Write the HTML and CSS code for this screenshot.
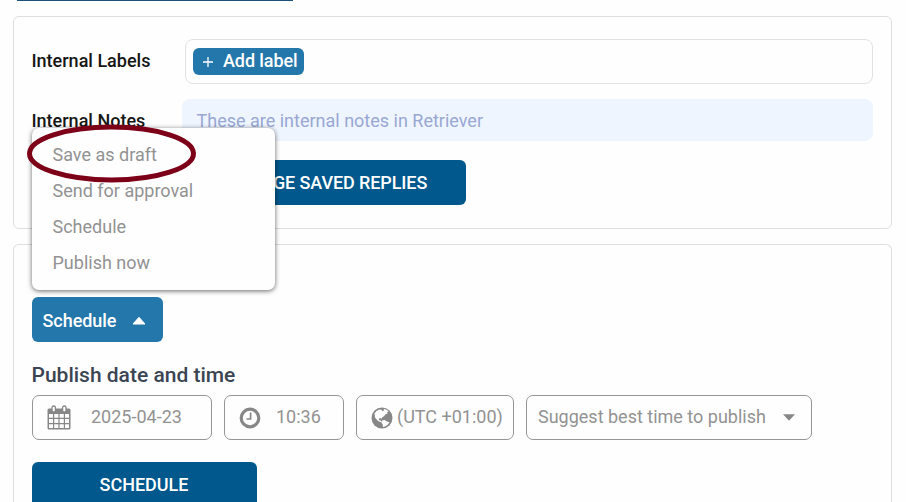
FILE: index.html
```html
<!DOCTYPE html>
<html lang="en">

<head>
    <meta charset="UTF-8">
    <meta name="viewport" content="width=device-width, initial-scale=1.0">
    <title>Publish Settings</title>
    <link rel="stylesheet" href="styles.css">
</head>

<body>
    <div class="top-bar"></div>

    <section class="card labels-card">
        <div class="row">
            <span class="row-label">Internal Labels</span>
            <div class="label-box">
                <button type="button" class="add-label">
                    <svg width="10" height="10" viewBox="0 0 10 10"><path d="M5 0v10M0 5h10" stroke="#fff" stroke-width="1.3"/></svg>
                    <span>Add label</span>
                </button>
            </div>
        </div>
        <div class="row notes-row">
            <span class="row-label">Internal Notes</span>
            <div class="notes-box">These are internal notes in Retriever</div>
        </div>
        <button type="button" class="btn saved-replies">MANAGE SAVED REPLIES</button>
    </section>

    <section class="card publish-card">
        <div class="dropdown">
            <button type="button" class="dropdown-toggle">
                <span>Schedule</span>
                <svg width="14" height="8" viewBox="0 0 14 8"><path d="M7 .3 13 7H1z" fill="#fff" stroke="#fff" stroke-linejoin="round"/></svg>
            </button>
            <ul class="dropdown-menu">
                <li>Save as draft</li>
                <li>Send for approval</li>
                <li>Schedule</li>
                <li>Publish now</li>
            </ul>
            <svg class="marker" width="170" height="60" viewBox="0 0 170 60"><ellipse cx="84.500" cy="30.500" rx="82" ry="26.500" fill="none" stroke="#7d0019" stroke-width="5"/></svg>
        </div>

        <h2>Publish date and time</h2>
        <div class="fields">
            <div class="field date-field">
                <svg width="24" height="25" viewBox="0 0 24 25">
                    <path fill="#878787" fill-rule="evenodd" d="M2 3.500h20A1.500 1.500 0 0 1 23.500 5v18a1.500 1.500 0 0 1-1.500 1.500H2A1.500 1.500 0 0 1 .5 23V5A1.500 1.500 0 0 1 2 3.500zM2 9v3.800h4V9zM7.200 9v3.800h4.200V9zM12.600 9v3.800h4.200V9zM18 9v3.800h4V9zM2 14v4h4v-4zM7.200 14v4h4.200v-4zM12.600 14v4h4.200v-4zM18 14v4h4v-4zM2 19.200V23h4v-3.800zM7.200 19.200V23h4.200v-3.800zM12.600 19.200V23h4.200v-3.800zM18 19.200V23h4v-3.800z"/>
                    <rect x="5" y="1" width="3.400" height="6" rx="1.600" fill="#fff" stroke="#878787" stroke-width="1.300"/>
                    <rect x="15.600" y="1" width="3.400" height="6" rx="1.600" fill="#fff" stroke="#878787" stroke-width="1.300"/>
                </svg>
                <span>2025-04-23</span>
            </div>
            <div class="field time-field">
                <svg width="22" height="22" viewBox="0 0 22 22" fill="none" stroke="#878787"><circle cx="11" cy="11" r="8.800" stroke-width="3.200"/><path d="M11.600 5.500V12H7.500" stroke-width="1.700"/></svg>
                <span>10:36</span>
            </div>
            <div class="field zone-field">
                <svg width="22" height="22" viewBox="0 0 22 22"><circle cx="11" cy="11" r="10.500" fill="#878787"/><path fill="#fff" d="M3.500 6.500L5.500 4l3-1.500 2 .3 1 1.500 1.500-.8-.3-1.700 3.300 1.200 1.700 1.500-1.800.5.8 1.500-2.200.8-1.500 2-1.800 1-.5 1.500-1.400-.8-1.500.8.4 1.500 1.600.2.700 1.500L9 15l-2.500-1.500L4 10.500z"/><path fill="#fff" d="M11 13.500l2.500-.5 2.500 1.500 2.500.8-1.800 2.500-2.700 1.700-2 .5-.3-2.500-1.400-2z"/></svg>
                <span>(UTC +01:00)</span>
            </div>
            <div class="field suggest-field">
                <span>Suggest best time to publish</span>
                <svg width="12" height="7" viewBox="0 0 12 7"><path d="M0 .3h12L6 6.800z" fill="#878787"/></svg>
            </div>
        </div>
        <button type="button" class="btn submit">SCHEDULE</button>
    </section>
</body>

</html>
```
FILE: styles.css
```css
* {
    box-sizing: border-box;
}

body {
    display: flex;
    flex-direction: column;
    margin: 0;
    height: 502px;
    overflow: hidden;
    font-family: Roboto, Arial, sans-serif;
    font-size: 18px;
    line-height: 24px;
    background-color: #fefefe;
}

button {
    border: none;
    font: inherit;
    color: white;
    cursor: pointer;
}

svg {
    display: block;
    flex: none;
}

.top-bar {
    flex: none;
    width: 276px;
    height: 1px;
    margin: 0 0 15px 17px;
    background-color: #1b527c;
}

.card {
    flex: none;
    width: 879px;
    margin-left: 13px;
    border: 1px solid #dfdfdf;
    border-radius: 6px;
}

.labels-card {
    height: 213px;
    padding: 22px 18px 0 17.5px;
}

.row {
    display: flex;
    align-items: center;
}

.row-label {
    width: 153.5px;
    padding-bottom: 2px;
    font-weight: 500;
    color: #161616;
}

.label-box {
    flex: 1;
    display: flex;
    align-items: center;
    height: 45px;
    padding-left: 7px;
    border: 1px solid #e2e2e2;
    border-radius: 8px;
}

.add-label {
    display: flex;
    align-items: center;
    gap: 10px;
    width: 111px;
    height: 27px;
    padding: 0 0 0 10px;
    border-radius: 6px;
    background-color: #2477ab;
    font-weight: 500;
    letter-spacing: -0.1px;
}

.add-label span {
    padding-bottom: 2px;
}

.notes-row {
    margin-top: 15px;
}

.notes-row .row-label {
    width: 150.5px;
    padding: 2px 0 0;
}

.notes-box {
    flex: 1;
    height: 42px;
    padding: 10px 14.5px 8px;
    border-radius: 8px;
    background-color: #eff5ff;
    color: #98a8d3;
}

.btn {
    display: block;
    height: 45px;
    border-radius: 6px;
    background-color: #00588c;
    font-weight: 500;
}

.saved-replies {
    width: 282px;
    margin: 19px 0 0 152.5px;
    padding: 0 8px 0 6px;
    letter-spacing: -0.1px;
}

.publish-card {
    flex: 1;
    margin-top: 15px;
    padding: 52px 18px 0;
    border-bottom: none;
    border-radius: 6px 6px 0 0;
    min-height: 0;
    overflow: visible;
}

.dropdown {
    position: relative;
    width: 131px;
}

.dropdown-toggle {
    display: flex;
    align-items: center;
    gap: 16px;
    width: 131px;
    height: 45px;
    padding: 2px 0 0 10.5px;
    border-radius: 6px;
    background-color: #2477ab;
    font-weight: 500;
    letter-spacing: -0.05px;
}

.dropdown-menu {
    position: absolute;
    left: 0;
    bottom: 52px;
    width: 243px;
    height: 162px;
    margin: 0;
    padding: 9px 20.5px;
    list-style: none;
    border-radius: 7px;
    background-color: #fefefe;
    box-shadow: 0 1px 5px rgba(0, 0, 0, 0.6);
    color: #929292;
}

.dropdown-menu li {
    height: 36px;
    line-height: 36px;
}

.marker {
    position: absolute;
    left: -5px;
    bottom: 159px;
}

h2 {
    margin: 20px 0 7px -0.5px;
    font-size: 21px;
    font-weight: 500;
    line-height: 26px;
    color: #3b4453;
}

.fields {
    display: flex;
    gap: 12px;
}

.field {
    display: flex;
    align-items: center;
    height: 45px;
    border: 1px solid #959595;
    border-radius: 7px;
    color: #929292;
}

.field span {
    padding-bottom: 2px;
}

.date-field {
    gap: 20px;
    width: 180px;
    padding-left: 14px;
}

.time-field {
    gap: 15px;
    width: 120px;
    padding-left: 14px;
}

.zone-field {
    gap: 4px;
    width: 158px;
    padding-left: 14px;
}

.suggest-field {
    gap: 17px;
    width: 286px;
    padding-left: 11px;
}

.submit {
    width: 225px;
    height: 40px;
    margin-top: 22px;
    padding: 5px 7px 0 6px;
    border-radius: 6px 6px 0 0;
}
```
